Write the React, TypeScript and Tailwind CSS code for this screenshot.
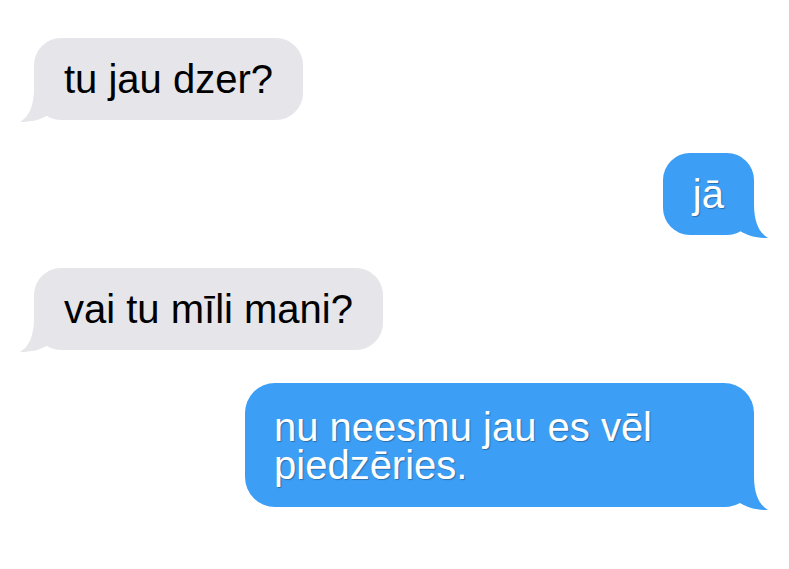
import React from "react";

type Msg = { id: number; text: string; mine: boolean };

const messages: Msg[] = [
  { id: 1, text: "tu jau dzer?", mine: false },
  { id: 2, text: "jā", mine: true },
  { id: 3, text: "vai tu mīli mani?", mine: false },
  { id: 4, text: "nu neesmu jau es vēl piedzēries.", mine: true },
];

// iMessage style tail, drawn for the left side and mirrored for the right
function Tail({ mine }: { mine: boolean }) {
  return (
    <svg
      width="60"
      height="40"
      viewBox="0 0 60 40"
      className={
        mine
          ? "absolute right-[-15px] bottom-[-3px] -scale-x-100"
          : "absolute left-[-15px] bottom-[-2px]"
      }
    >
      <path
        d="M15 6 C15 26 9 35 1 40 C12 40 21 38 29 33 C35 36 41 37 52 37 L52 6 Z"
        fill={mine ? "#3d9ef5" : "#e5e5ea"}
      />
    </svg>
  );
}

function Bubble({ msg }: { msg: Msg }) {
  const base =
    "relative px-[30px] text-[40px] leading-[38px] font-['Liberation_Sans',Arial,sans-serif]";
  const side = msg.mine
    ? "self-end mr-[35px] bg-[#3d9ef5] text-white [text-shadow:1px_1px_1px_rgba(0,0,0,0.3)]"
    : "self-start ml-[34px] bg-[#e5e5ea] text-black";
  const shape =
    msg.id === 4
      ? "w-[509px] rounded-[30px] pt-[25px] pb-[23px] pl-[29px]"
      : "rounded-[27px] py-[22px]";

  return (
    <div className={`${base} ${side} ${shape}`}>
      <Tail mine={msg.mine} />
      <span className="relative">{msg.text}</span>
    </div>
  );
}

export default function App() {
  return (
    <div className="w-[789px] h-[569px] bg-white overflow-hidden">
      <div className="flex flex-col gap-[33px] pt-[38px]">
        {messages.map((m) => (
          <Bubble key={m.id} msg={m} />
        ))}
      </div>
    </div>
  );
}
